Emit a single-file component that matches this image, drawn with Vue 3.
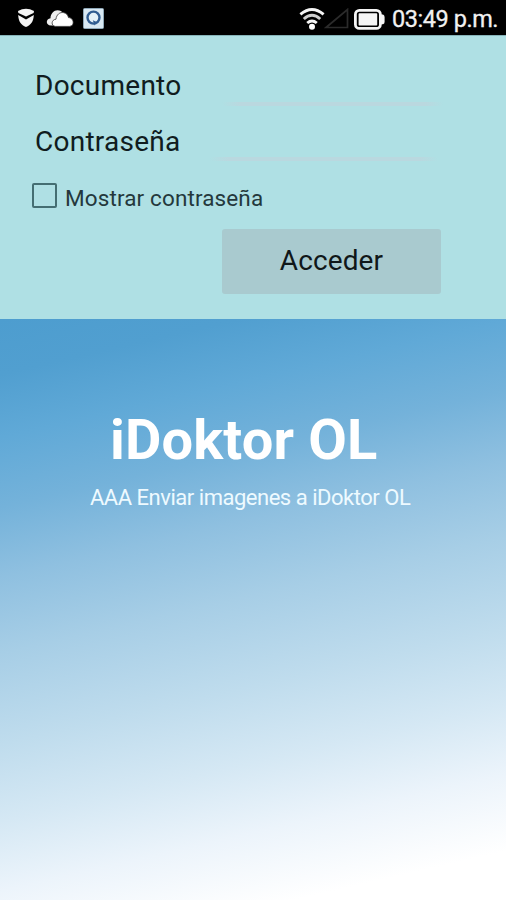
<script setup>
import { ref } from 'vue'

const documento = ref('')
const clave = ref('')
const mostrar = ref(false)
</script>

<template>
  <div class="screen">
    <header class="status">
      <svg class="shield" viewBox="0 0 18 20" width="18" height="20">
        <path d="M1 3 Q9 -1.5 17 3 L16.6 5 L9 8.6 L1.4 5Z" fill="#f4f4f4" />
        <path d="M1.2 7 L9 11.4 L16.8 7 C16.6 13.5 13.8 17 9 19 C4.2 17 1.4 13.5 1.2 7Z" fill="#f4f4f4" />
      </svg>
      <svg class="cloud" viewBox="0 0 28 18" width="28" height="18">
        <path d="M5 16.5 C-1 16 0 9.5 4.5 9.2 C4.5 4.5 8 1.2 11.5 1.2 C14 1.2 16 2.4 17.2 4.2 L9 16.5Z" fill="#eee" />
        <path d="M9.5 17.4 C4.6 17 5.2 10.6 10 10.2 C10.4 5.5 14 3 17.4 3.6 C20.5 4 22 6.4 22.5 8.6 C28 8.6 29 17 23.5 17.4Z" fill="#fff" stroke="#333" stroke-width=".8" />
      </svg>
      <svg class="app" viewBox="0 0 21 21" width="21" height="21">
        <rect x=".5" y=".5" width="20" height="20" rx="1" fill="#d9e9f3" stroke="#8fa8b8" />
        <circle cx="10.5" cy="9.6" r="6" fill="#e4f1f8" stroke="#315d91" stroke-width="2.4" />
        <path d="M9.8 12.2 L13.8 14 L11.6 17.6Z" fill="#315d91" />
      </svg>
      <span class="spacer"></span>
      <svg class="wifi" viewBox="0 0 26 24" width="26" height="24">
        <g fill="none" stroke="#f5f5f5" stroke-width="2.9">
          <path d="M1.4 7.4 Q13 -2.4 24.6 7.4" />
          <path d="M4.8 12 Q13 4.6 21.2 12" stroke="#cfcfcf" />
          <path d="M8.2 16 Q13 12 17.8 16" />
        </g>
        <circle cx="13" cy="19.8" r="3" fill="#fff" />
      </svg>
      <svg class="signal" viewBox="0 0 25 21" width="25" height="21">
        <path d="M2 19.5 L23.5 1.5 V19.5Z" fill="none" stroke="#2b2b2b" stroke-width="1.7" />
      </svg>
      <svg class="battery" viewBox="0 0 31 21" width="31" height="21">
        <rect x="1.4" y="1.4" width="25" height="18" rx="4" fill="none" stroke="#f5f5f5" stroke-width="2.8" />
        <rect x="4.6" y="4.2" width="18.6" height="12.4" rx=".8" fill="#f5f5f5" />
        <path d="M27 5.5 H29 Q30.6 6 30.6 8 V12.8 Q30.6 14.8 29 15.3 H27Z" fill="#f5f5f5" />
      </svg>
      <span class="time">03:49 p.m.</span>
    </header>

    <form class="login" @submit.prevent>
      <label class="field">
        <span class="name">Documento</span>
        <input v-model="documento" class="line-doc" type="text" />
      </label>
      <label class="field">
        <span class="name">Contraseña</span>
        <input v-model="clave" class="line-pass" :type="mostrar ? 'text' : 'password'" />
      </label>
      <label class="show">
        <input v-model="mostrar" class="check" type="checkbox" />
        <span class="show-text">Mostrar contraseña</span>
      </label>
      <button class="enter" type="submit">Acceder</button>
    </form>

    <main class="hero">
      <h1 class="title">iDoktor OL</h1>
      <p class="subtitle">AAA Enviar imagenes a iDoktor OL</p>
    </main>
  </div>
</template>

<style>
body {
  margin: 0;
}
</style>

<style scoped>
.screen {
  width: 506px;
  height: 900px;
  display: flex;
  flex-direction: column;
  overflow: hidden;
  font-family: Roboto, "Liberation Sans", sans-serif;
  white-space: nowrap;
}
.status {
  box-sizing: border-box;
  height: 35px;
  flex: none;
  display: flex;
  align-items: center;
  padding: 0 8px 0 17px;
  background: #000;
  color: #f1f1f1;
}
.cloud { margin-left: 11px; }
.app { margin: 1px 0 0 9px; }
.spacer { flex: 1; }
.wifi { margin: 2px 2px 0 0; }
.signal { margin: 2px 0 0 -3px; }
.battery { margin: 3px 0 0 5px; }
.time {
  margin: 3px 0 0 7px;
  font-size: 23.5px;
  line-height: 28px;
  letter-spacing: -0.45px;
  width: 106px;
  -webkit-text-stroke: 0.3px #f1f1f1;
}
.login {
  box-sizing: border-box;
  height: 284px;
  flex: none;
  display: flex;
  flex-direction: column;
  padding-top: 23px;
  background: #afe0e4;
  box-shadow: inset 0 1px #86b3b8;
}
.field {
  height: 56px;
  display: flex;
  align-items: center;
  padding-left: 35px;
}
.name {
  width: 175px;
  flex: none;
  color: #101c20;
  font-size: 28px;
  line-height: 32px;
  letter-spacing: 0.26px;
}
.field input {
  box-sizing: border-box;
  height: 32px;
  padding: 0 6px;
  border: 0;
  outline: 0;
  background: linear-gradient(90deg, transparent, #bad8df 8%, #bad8df 92%, transparent) bottom / 100% 4px no-repeat;
  font: 22px Roboto, sans-serif;
}
.field .line-doc { width: 221px; margin: 7px 0 0 12px; }
.field .line-pass { width: 228px; margin: 5px 0 0; }
.show {
  height: 50px;
  margin-top: 1px;
  display: flex;
  align-items: center;
  padding-left: 32px;
}
.check {
  appearance: none;
  box-sizing: border-box;
  width: 25px;
  height: 25px;
  margin: 0 8px 1px 0;
  border: 2px solid #446e72;
  border-radius: 2px;
}
.show-text {
  margin-top: 3px;
  color: #24383c;
  font-size: 22.5px;
  line-height: 28px;
  letter-spacing: 0.12px;
}
.enter {
  width: 219px;
  height: 65px;
  margin: 8px 0 0 222px;
  padding: 0 0 2px;
  border: 0;
  border-radius: 3px;
  background: #a9cacf;
  color: #101719;
  font: 28px/32px Roboto, sans-serif;
  letter-spacing: 0.1px;
}
.hero {
  flex: 1;
  background: linear-gradient(167deg, #4d9dcf 0%, #519fd0 8%, #60a9d7 17%, #74b2da 27%, #8fc0e0 37%, #a7cee6 48%, #bfdced 61%, #d5e8f4 72%, #ecf4fb 82%, #fff 93%);
  color: #fff;
}
.title {
  margin: 88px 0 0 110px;
  font-size: 56px;
  line-height: 66px;
  font-weight: 700;
  letter-spacing: 0.15px;
}
.subtitle {
  margin: 11px 0 0 90px;
  color: #eefaff;
  font-size: 22px;
  line-height: 28px;
  letter-spacing: -0.48px;
}
</style>
